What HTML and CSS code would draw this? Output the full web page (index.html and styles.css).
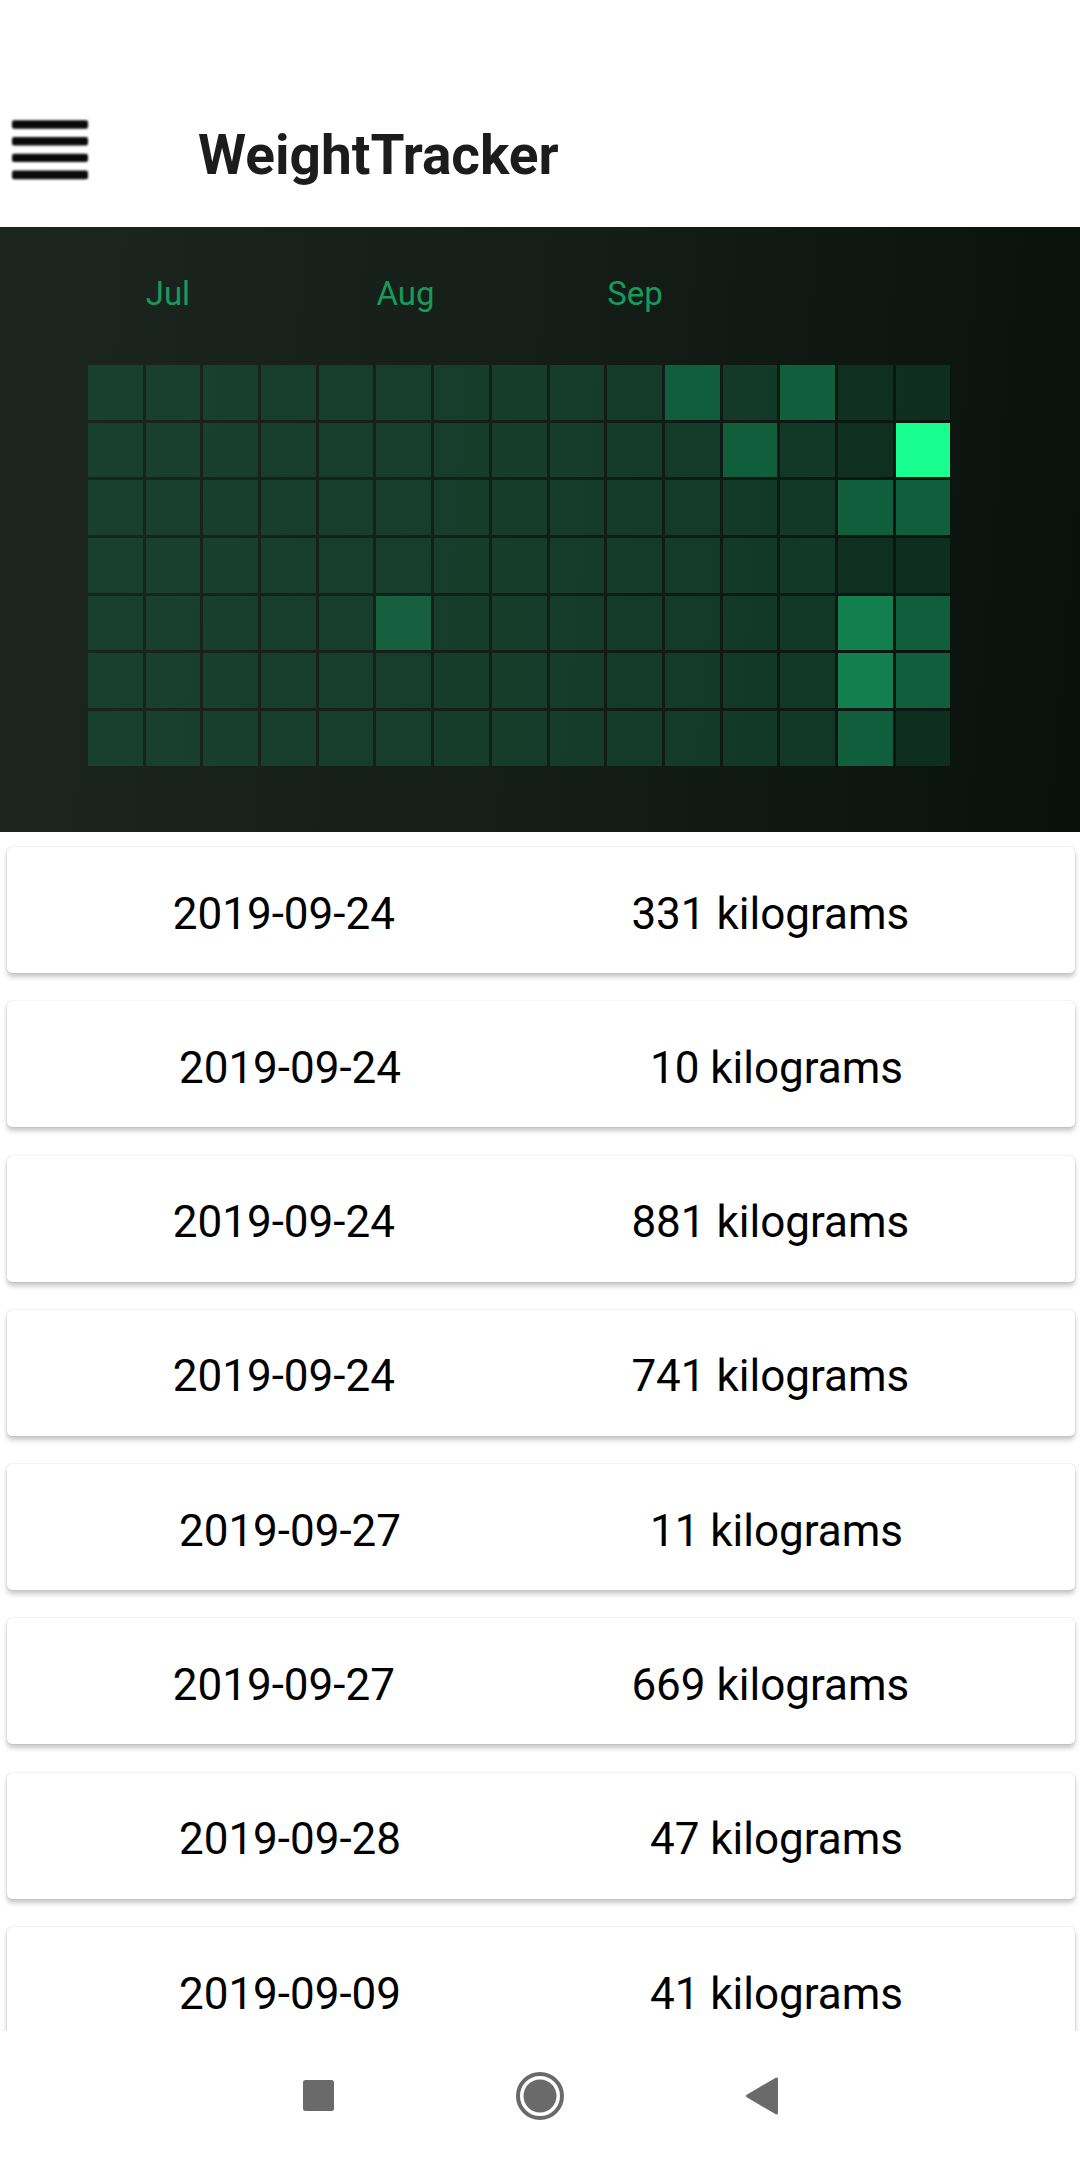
FILE: index.html
```html
<!DOCTYPE html>
<html>
<head>
<meta charset="utf-8">
<link rel="stylesheet" href="styles.css">
</head>
<body>
<div class="screen">
  <header class="appbar">
    <div class="toolbar">
      <svg class="menu" viewBox="0 0 76 60" width="76" height="60">
        <rect x="0" y="0.3" width="76" height="8.4" rx="2"/>
        <rect x="0" y="17" width="76" height="8.4" rx="2"/>
        <rect x="0" y="33.7" width="76" height="8.4" rx="2"/>
        <rect x="0" y="50.4" width="76" height="8.8" rx="2"/>
      </svg>
      <h1 class="title">WeightTracker</h1>
    </div>
  </header>

  <section class="heatmap">
    <div class="months">
      <span class="month m-jul">Jul</span>
      <span class="month m-aug">Aug</span>
      <span class="month m-sep">Sep</span>
    </div>
    <div class="grid">
      <!-- row 0 -->
      <i class="c"></i><i class="c"></i><i class="c"></i><i class="c"></i><i class="c"></i><i class="c"></i><i class="c"></i><i class="c"></i><i class="c"></i><i class="c"></i><i class="c m"></i><i class="c"></i><i class="c m"></i><i class="c lo"></i><i class="c lo"></i>
      <!-- row 1 -->
      <i class="c"></i><i class="c"></i><i class="c"></i><i class="c"></i><i class="c"></i><i class="c"></i><i class="c"></i><i class="c"></i><i class="c"></i><i class="c"></i><i class="c"></i><i class="c m"></i><i class="c"></i><i class="c lo"></i><i class="c x"></i>
      <!-- row 2 -->
      <i class="c"></i><i class="c"></i><i class="c"></i><i class="c"></i><i class="c"></i><i class="c"></i><i class="c"></i><i class="c"></i><i class="c"></i><i class="c"></i><i class="c"></i><i class="c"></i><i class="c"></i><i class="c m"></i><i class="c m"></i>
      <!-- row 3 -->
      <i class="c"></i><i class="c"></i><i class="c"></i><i class="c"></i><i class="c"></i><i class="c"></i><i class="c"></i><i class="c"></i><i class="c"></i><i class="c"></i><i class="c"></i><i class="c"></i><i class="c"></i><i class="c lo"></i><i class="c lo"></i>
      <!-- row 4 -->
      <i class="c"></i><i class="c"></i><i class="c"></i><i class="c"></i><i class="c"></i><i class="c m2"></i><i class="c"></i><i class="c"></i><i class="c"></i><i class="c"></i><i class="c"></i><i class="c"></i><i class="c"></i><i class="c h"></i><i class="c m"></i>
      <!-- row 5 -->
      <i class="c"></i><i class="c"></i><i class="c"></i><i class="c"></i><i class="c"></i><i class="c"></i><i class="c"></i><i class="c"></i><i class="c"></i><i class="c"></i><i class="c"></i><i class="c"></i><i class="c"></i><i class="c h"></i><i class="c m"></i>
      <!-- row 6 -->
      <i class="c"></i><i class="c"></i><i class="c"></i><i class="c"></i><i class="c"></i><i class="c"></i><i class="c"></i><i class="c"></i><i class="c"></i><i class="c"></i><i class="c"></i><i class="c"></i><i class="c"></i><i class="c m"></i><i class="c lo"></i>
    </div>
  </section>

  <main class="list">
    <div class="card"><span class="cell">2019-09-24</span><span class="cell">331 kilograms</span></div>
    <div class="card"><span class="cell">2019-09-24</span><span class="cell">10 kilograms</span></div>
    <div class="card"><span class="cell">2019-09-24</span><span class="cell">881 kilograms</span></div>
    <div class="card"><span class="cell">2019-09-24</span><span class="cell">741 kilograms</span></div>
    <div class="card"><span class="cell">2019-09-27</span><span class="cell">11 kilograms</span></div>
    <div class="card"><span class="cell">2019-09-27</span><span class="cell">669 kilograms</span></div>
    <div class="card"><span class="cell">2019-09-28</span><span class="cell">47 kilograms</span></div>
    <div class="card"><span class="cell">2019-09-09</span><span class="cell">41 kilograms</span></div>
  </main>

  <nav class="navbar">
    <div class="slot">
      <svg width="31" height="31" viewBox="0 0 31 31"><rect x="0" y="0" width="31" height="31" rx="2.5" fill="#6a6a6a"/></svg>
    </div>
    <div class="slot">
      <svg width="48" height="48" viewBox="0 0 48 48"><circle cx="24" cy="24" r="22" fill="none" stroke="#6a6a6a" stroke-width="4"/><circle cx="24" cy="24" r="16.5" fill="#6a6a6a"/></svg>
    </div>
    <div class="slot">
      <svg width="34" height="38" viewBox="0 0 34 38"><path d="M31.5 2 L31.5 36 L2.5 19 Z" fill="#6a6a6a" stroke="#6a6a6a" stroke-width="3" stroke-linejoin="round"/></svg>
    </div>
  </nav>
</div>
</body>
</html>
```

FILE: styles.css
```css
* { box-sizing: border-box; }

html, body {
  margin: 0;
  padding: 0;
  background: #ffffff;
}

body {
  font-family: Roboto, "Noto Sans", "Liberation Sans", sans-serif;
}

.screen {
  width: 1080px;
  height: 2160px;
  display: flex;
  flex-direction: column;
  overflow: hidden;
  background: #ffffff;
}

/* ---------- app bar ---------- */
.appbar {
  height: 227px;
  flex: 0 0 227px;
  padding-top: 73px;
  background: #ffffff;
}

.toolbar {
  height: 154px;
  display: flex;
  align-items: center;
}

.menu {
  margin-left: 12px;
  fill: #0a0a0a;
  filter: blur(0.9px);
  flex: 0 0 auto;
}

.title {
  margin: 10px 0 0 110px;
  font-size: 55px;
  line-height: 1;
  font-weight: 700;
  color: #1c1c1c;
  letter-spacing: 0;
}

/* ---------- heatmap ---------- */
.heatmap {
  flex: 0 0 605px;
  height: 605px;
  padding: 50px 0 0 88px;
  background: linear-gradient(95deg, #1d2520 0%, #141c17 55%, #09110c 100%);
}

.months,
.grid {
  display: grid;
  grid-template-columns: repeat(15, 54.7px);
  column-gap: 3px;
}

.months {
  height: 33px;
}

.month {
  font-size: 33px;
  line-height: 1;
  color: #179a5c;
  white-space: nowrap;
}

.m-jul { grid-column: 2; }
.m-aug { grid-column: 6; }
.m-sep { grid-column: 10; }

.grid {
  margin-top: 55px;
  grid-template-rows: repeat(7, 54.7px);
  row-gap: 3px;
}

.c {
  display: block;
  background: rgba(24, 112, 74, 0.38);
}

.c.lo { background: rgba(18, 100, 64, 0.33); }
.c.m  { background: #115e3d; }
.c.m2 { background: #16603f; }
.c.h  { background: #12804e; }
.c.x  { background: #19ff8f; }

/* ---------- list ---------- */
.list {
  flex: 1 1 auto;
  overflow: hidden;
  padding: 15px 5px 0 7px;
  display: flex;
  flex-direction: column;
  gap: 28.3px;
}

.card {
  flex: 0 0 126px;
  height: 126px;
  background: #ffffff;
  border-radius: 5px;
  box-shadow: 0 4px 5px rgba(0, 0, 0, 0.22), 0 0 1.5px rgba(0, 0, 0, 0.22);
  display: flex;
  align-items: center;
  padding: 7px 47.5px 0 47.5px;
}

.cell {
  flex: 1 1 auto;
  text-align: center;
  font-size: 44px;
  line-height: 1;
  color: #000000;
  white-space: nowrap;
}

/* ---------- navigation bar ---------- */
.navbar {
  flex: 0 0 129px;
  height: 129px;
  background: #ffffff;
  display: flex;
  justify-content: center;
  align-items: center;
  position: relative;
  z-index: 1;
}

.slot {
  width: 222px;
  display: flex;
  justify-content: center;
  align-items: center;
}

.slot svg { display: block; }
```
